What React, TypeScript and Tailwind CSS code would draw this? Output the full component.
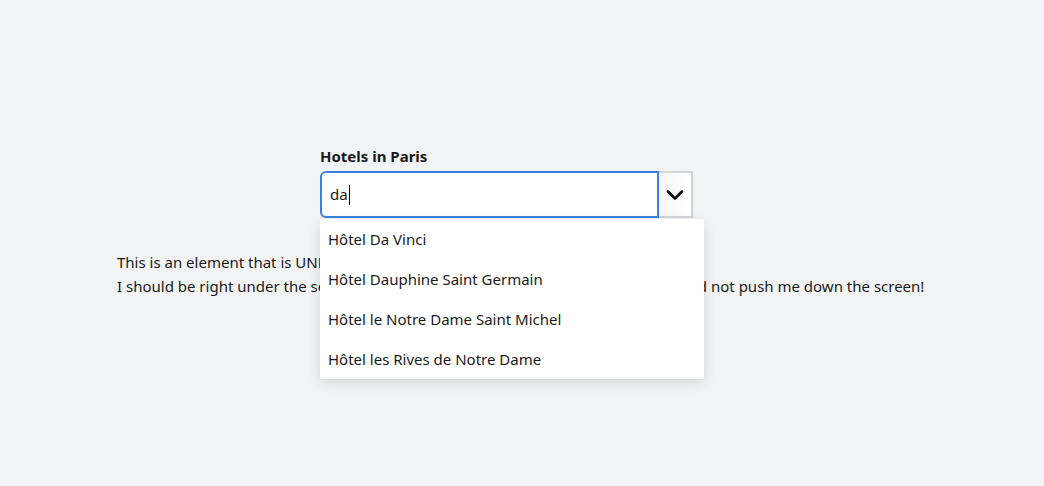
import { ChevronDown } from "lucide-react";

const hotels = [
  "Hôtel Da Vinci",
  "Hôtel Dauphine Saint Germain",
  "Hôtel le Notre Dame Saint Michel",
  "Hôtel les Rives de Notre Dame",
];

export default function App() {
  return (
    <div
      className="min-h-screen bg-[#f2f3f5] text-[#1a1a1a] pt-[146px] pl-[117px]"
      style={{ fontFamily: '"Noto Sans", sans-serif' }}
    >
      <div className="pl-[203px]">
        <label className="block text-[15px] font-bold leading-5 mb-[5px]">Hotels in Paris</label>
        <div className="relative w-[384px]">
          <div className="flex">
            <div className="w-[339px] h-[47px] bg-white border-2 border-[#3b7fe0] rounded-l-[6px] flex items-center px-[8px] text-[15px]">
              da<span className="inline-block w-px h-[20px] bg-black ml-px" />
            </div>
            <button className="w-[34px] h-[47px] border-2 border-l-0 border-[#d4d5d9] bg-gradient-to-r from-[#f6f6f7] to-white flex items-center justify-center">
              <ChevronDown size={28} strokeWidth={2.3} className="text-[#111]" />
            </button>
          </div>
          <ul className="absolute left-0 top-[48px] w-[384px] bg-white shadow-[0_4px_12px_rgba(0,0,0,0.12)] z-10">
            {hotels.map((h) => (
              <li key={h} className="h-10 flex items-center px-2 text-[15px]">
                {h}
              </li>
            ))}
          </ul>
        </div>
      </div>
      <div className="mt-[32px] text-[15px] leading-6">
        <p>This is an element that is UNDERNEATH the select component.</p>
        <p>I should be right under the select component, and the dropdown menu here should not push me down the screen!</p>
      </div>
    </div>
  );
}
